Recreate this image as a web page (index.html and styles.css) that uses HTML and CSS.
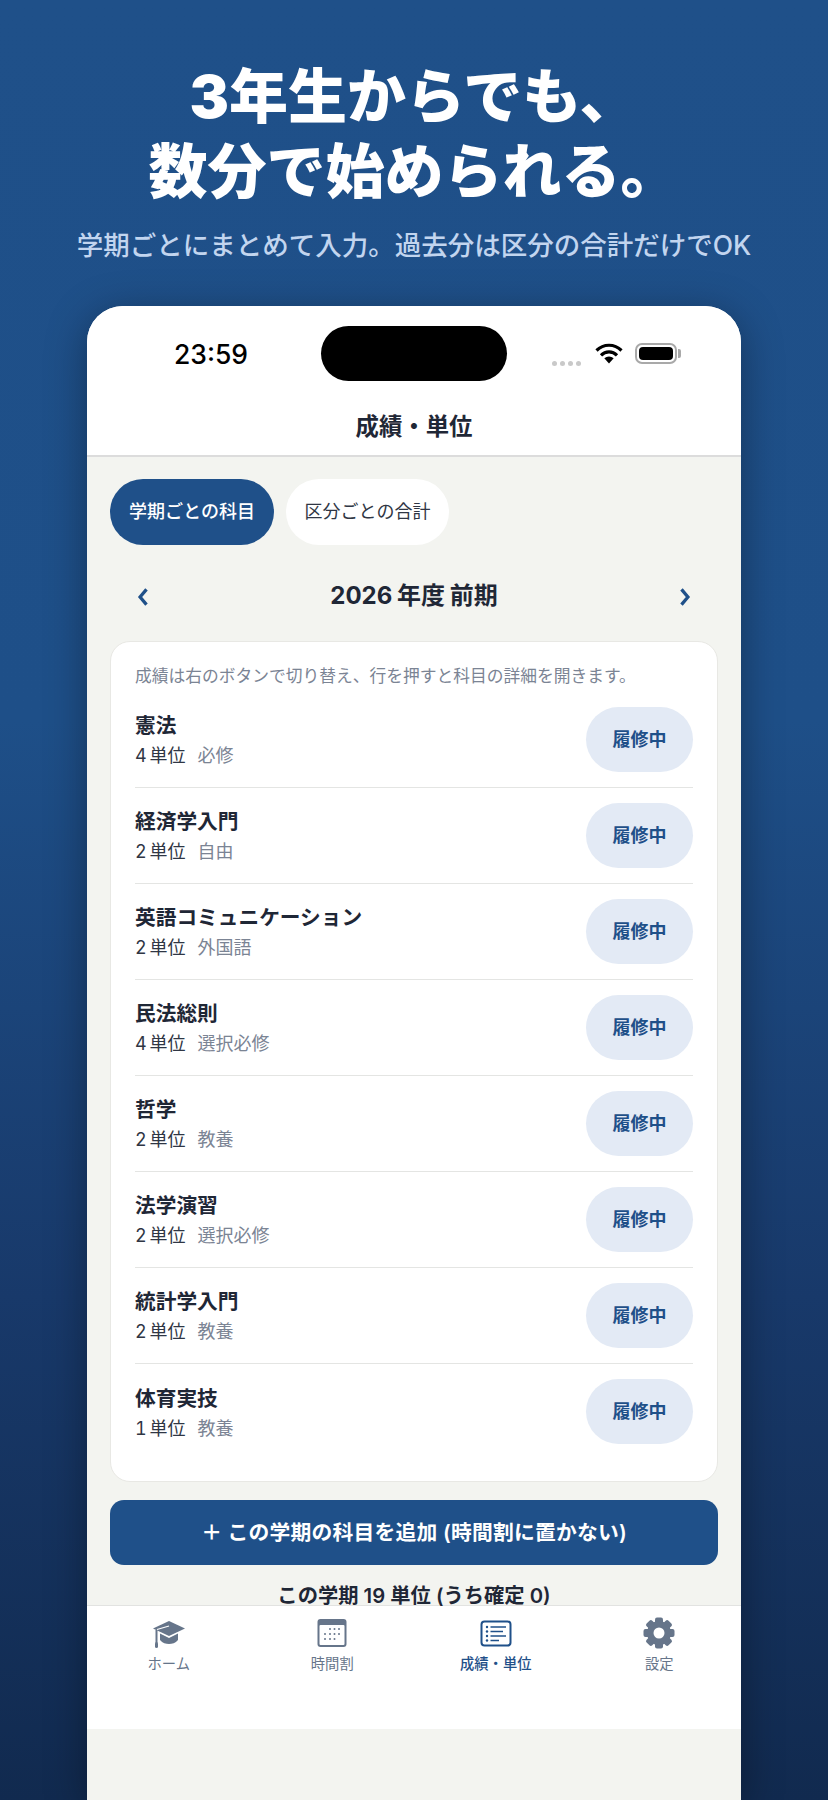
FILE: index.html
```html
<!DOCTYPE html>
<html lang="ja">
<head>
<meta charset="utf-8">
<title>成績・単位</title>
<link rel="stylesheet" href="styles.css">
</head>
<body>
<header class="hero">
  <h1 class="hero-title">3年生からでも、<br>数分で始められる。</h1>
  <p class="hero-sub">学期ごとにまとめて入力。過去分は区分の合計だけでOK</p>
</header>
<div class="phone">
  <div class="status">
    <span class="time">23:59</span>
    <span class="island"></span>
    <div class="status-right">
      <span class="dots"><i></i><i></i><i></i><i></i></span>
      <svg class="wifi" viewBox="0 0 28 21"><path d="M14 20.500L9.300 15.300a7 7 0 0 1 9.400 0z" fill="#000"/><path d="M1.500 7.500C8.500 0.500 19.500 0.500 26.500 7.500M6 12.300C10.500 7.800 17.500 7.800 22 12.300" fill="none" stroke="#000" stroke-width="3.200"/></svg>
      <span class="battery"><span class="battery-fill"></span></span>
    </div>
  </div>
  <div class="nav-title">成績・単位</div>
  <main class="main">
    <div class="segments">
      <span class="segment segment-on">学期ごとの科目</span>
      <span class="segment">区分ごとの合計</span>
    </div>
    <div class="term">
      <svg class="chev" viewBox="0 0 12 24"><path d="M9 5.500L3.500 12 9 18.500" /></svg>
      <span class="term-name">2026 年度 前期</span>
      <svg class="chev" viewBox="0 0 12 24"><path d="M3 5.500L8.500 12 3 18.500" /></svg>
    </div>
    <section class="card">
      <p class="hint">成績は右のボタンで切り替え、行を押すと科目の詳細を開きます。</p>
      <div class="row"><div class="row-text"><div class="row-name">憲法</div><div class="row-sub"><span class="units">4 単位</span><span class="kind">必修</span></div></div><span class="status-btn">履修中</span></div>
      <div class="row"><div class="row-text"><div class="row-name">経済学入門</div><div class="row-sub"><span class="units">2 単位</span><span class="kind">自由</span></div></div><span class="status-btn">履修中</span></div>
      <div class="row"><div class="row-text"><div class="row-name">英語コミュニケーション</div><div class="row-sub"><span class="units">2 単位</span><span class="kind">外国語</span></div></div><span class="status-btn">履修中</span></div>
      <div class="row"><div class="row-text"><div class="row-name">民法総則</div><div class="row-sub"><span class="units">4 単位</span><span class="kind">選択必修</span></div></div><span class="status-btn">履修中</span></div>
      <div class="row"><div class="row-text"><div class="row-name">哲学</div><div class="row-sub"><span class="units">2 単位</span><span class="kind">教養</span></div></div><span class="status-btn">履修中</span></div>
      <div class="row"><div class="row-text"><div class="row-name">法学演習</div><div class="row-sub"><span class="units">2 単位</span><span class="kind">選択必修</span></div></div><span class="status-btn">履修中</span></div>
      <div class="row"><div class="row-text"><div class="row-name">統計学入門</div><div class="row-sub"><span class="units">2 単位</span><span class="kind">教養</span></div></div><span class="status-btn">履修中</span></div>
      <div class="row row-last"><div class="row-text"><div class="row-name">体育実技</div><div class="row-sub"><span class="units">1 単位</span><span class="kind">教養</span></div></div><span class="status-btn">履修中</span></div>
    </section>
    <div class="add-btn">＋ この学期の科目を追加 (時間割に置かない)</div>
    <div class="summary">この学期 19 単位 (うち確定 0)</div>
  </main>
  <nav class="tabs">
    <div class="tab">
      <svg class="tab-icon" viewBox="0 0 34 34"><path d="M17 5L33 12.500 17 20 1 12.500z" fill="#66758a"/><path d="M8 17.500V24c2.500 3 6 4 9 4s6.500-1 9-4v-6.500L17 22z" fill="#66758a"/><path d="M4.500 14V27" stroke="#66758a" stroke-width="2" fill="none"/><path d="M5 13.500L17 10" stroke="#fff" stroke-width="1.300" fill="none"/><rect x="3" y="26" width="3" height="6" rx="1.500" fill="#66758a"/></svg>
      <span class="tab-label">ホーム</span>
    </div>
    <div class="tab">
      <svg class="tab-icon" viewBox="0 0 34 34"><rect x="2.500" y="3" width="29" height="28" rx="3" fill="#66758a"/><rect x="4.500" y="9" width="25" height="20" rx="1" fill="#fff"/><g fill="#66758a"><circle cx="15" cy="13" r="1"/><circle cx="19.500" cy="13" r="1"/><circle cx="24" cy="13" r="1"/><circle cx="10" cy="18" r="1"/><circle cx="15" cy="18" r="1"/><circle cx="19.500" cy="18" r="1"/><circle cx="24" cy="18" r="1"/><circle cx="10" cy="23" r="1"/><circle cx="15" cy="23" r="1"/><circle cx="19.500" cy="23" r="1"/></g></svg>
      <span class="tab-label">時間割</span>
    </div>
    <div class="tab tab-on">
      <svg class="tab-icon" viewBox="0 0 34 34"><rect x="2.500" y="5.500" width="29" height="24" rx="3" fill="none" stroke="#1f5089" stroke-width="2"/><g fill="#1f5089"><circle cx="8" cy="11" r="1.200"/><circle cx="8" cy="15.500" r="1.200"/><circle cx="8" cy="20" r="1.200"/><circle cx="8" cy="24.500" r="1.200"/></g><path d="M11.500 11H27M11.500 15.500H24M11.500 20H27M11.500 24.500H20" stroke="#1f5089" stroke-width="1.500" fill="none"/></svg>
      <span class="tab-label">成績・単位</span>
    </div>
    <div class="tab">
      <svg class="tab-icon" viewBox="0 0 34 34"><g fill="#66758a"><rect x="13" y="1.500" width="8" height="31" rx="2"/><rect x="13" y="1.500" width="8" height="31" rx="2" transform="rotate(45 17 17)"/><rect x="13" y="1.500" width="8" height="31" rx="2" transform="rotate(90 17 17)"/><rect x="13" y="1.500" width="8" height="31" rx="2" transform="rotate(135 17 17)"/><circle cx="17" cy="17" r="12"/></g><circle cx="17" cy="17" r="5.500" fill="#fff"/></svg>
      <span class="tab-label">設定</span>
    </div>
  </nav>
</div>
</body>
</html>
```
FILE: styles.css
```css
* { box-sizing: border-box; }
html, body { margin: 0; height: 1800px; overflow: hidden; }
body {
  display: flex;
  flex-direction: column;
  background: linear-gradient(180deg, #1f5089 0%, #1e4f88 40%, #18396a 72%, #112a4f 100%);
  font-family: Inter, "Noto Sans CJK JP", sans-serif;
}
.hero { height: 306px; padding-top: 59px; text-align: center; }
.hero-title {
  margin: 0;
  color: #fff;
  font-size: 59px;
  line-height: 75px;
  font-weight: 900;
}
.hero-sub {
  margin: 16px 0 0;
  color: #c2d5ef;
  font-size: 26.500px;
  line-height: 40px;
  font-weight: 500;
}
.phone {
  flex: 1;
  margin: 0 87px;
  background: #f3f4f0;
  border-radius: 36px 36px 0 0;
  box-shadow: 0 8px 40px rgba(0, 0, 0, .35);
  overflow: hidden;
}
.status {
  height: 99px;
  background: #fff;
  display: grid;
  grid-template-columns: 234px 186px 1fr;
  align-items: start;
}
.time {
  justify-self: end;
  margin: 30px 73px 0 0;
  font-size: 26.500px;
  line-height: 36px;
  font-weight: 500;
  color: #000;
}
.island {
  display: block;
  margin-top: 20px;
  height: 55px;
  border-radius: 28px;
  background: #000;
}
.status-right { display: flex; align-items: flex-start; padding: 37px 0 0 45px; }
.dots { display: flex; gap: 3px; margin-top: 18px; }
.dots i { display: block; width: 5px; height: 5px; border-radius: 50%; background: #c9c9c9; }
.wifi { width: 28px; height: 21px; margin-left: 14px; }
.battery {
  display: block;
  position: relative;
  width: 42px;
  height: 21px;
  margin-left: 12px;
  padding: 2px;
  border: 2px solid #a9a9a9;
  border-radius: 7px;
}
.battery::after {
  content: "";
  position: absolute;
  right: -6px;
  top: 4px;
  width: 3px;
  height: 9px;
  border-radius: 0 2px 2px 0;
  background: #a9a9a9;
}
.battery-fill { display: block; height: 100%; border-radius: 4px; background: #000; }
.nav-title {
  height: 52px;
  background: #fff;
  border-bottom: 2px solid #dcdcdc;
  text-align: center;
  font-size: 23.400px;
  line-height: 44px;
  font-weight: 600;
  color: #1f2736;
}
.main { height: 1148px; padding: 22px 23px 0; }
.segments { display: flex; gap: 12px; }
.segment {
  height: 66px;
  width: 163px;
  border-radius: 33px;
  background: #fff;
  font-size: 18px;
  line-height: 66px;
  text-align: center;
  color: #2f3644;
}
.segment-on { width: 164px; background: #1f5089; color: #fff; font-weight: 500; }
.term {
  display: flex;
  justify-content: space-between;
  align-items: center;
  height: 96px;
  padding: 0 26px;
}
.chev { width: 14px; height: 28px; margin-top: 8px; fill: none; stroke: #1f5089; stroke-width: 2.800; }
.term-name { font-size: 24px; font-weight: 700; color: #1f2736; word-spacing: -1px; }
.card {
  background: #fff;
  border: 1px solid #e8e8e4;
  border-radius: 20px;
  padding: 20px 24px 21px;
}
.hint { margin: 0 0 2px; font-size: 16.750px; line-height: 28px; color: #7b8494; }
.row {
  display: flex;
  justify-content: space-between;
  align-items: center;
  height: 96px;
  padding-bottom: 1px;
  border-bottom: 1px solid #e4e5e3;
}
.row-last { border-bottom: 0; }
.row-text { padding-top: 4px; }
.row-name { font-size: 20.700px; line-height: 30px; font-weight: 600; color: #1f2736; }
.row-sub { display: flex; gap: 12px; font-size: 18px; line-height: 30px; margin-top: 0; }
.units { color: #2f3644; word-spacing: -2px; font-variant-numeric: tabular-nums; }
.kind { color: #7b8494; }
.status-btn {
  width: 107px;
  height: 65px;
  border-radius: 33px;
  background: #e3eaf5;
  color: #1f5089;
  font-size: 18px;
  line-height: 65px;
  font-weight: 600;
  text-align: center;
}
.add-btn {
  height: 65px;
  margin-top: 18px;
  border-radius: 14px;
  background: #1f5089;
  color: #fff;
  font-size: 20.800px;
  line-height: 65px;
  font-weight: 600;
  text-align: center;
  letter-spacing: .2px;
}
.summary {
  margin-top: 21px;
  text-align: center;
  font-size: 20.300px;
  line-height: 20px;
  font-weight: 600;
  color: #1f2736;
}
.tabs {
  display: grid;
  grid-template-columns: repeat(4, 1fr);
  height: 124px;
  background: #fff;
  border-top: 1px solid #e2e3e1;
  padding-top: 10px;
  align-items: start;
}
.tab { display: flex; flex-direction: column; align-items: center; }
.tab-icon { width: 34px; height: 34px; }
.tab-label { margin-top: 3px; font-size: 14.300px; line-height: 22px; color: #66758a; }
.tab-on .tab-label { color: #1f5089; font-weight: 500; }
```
